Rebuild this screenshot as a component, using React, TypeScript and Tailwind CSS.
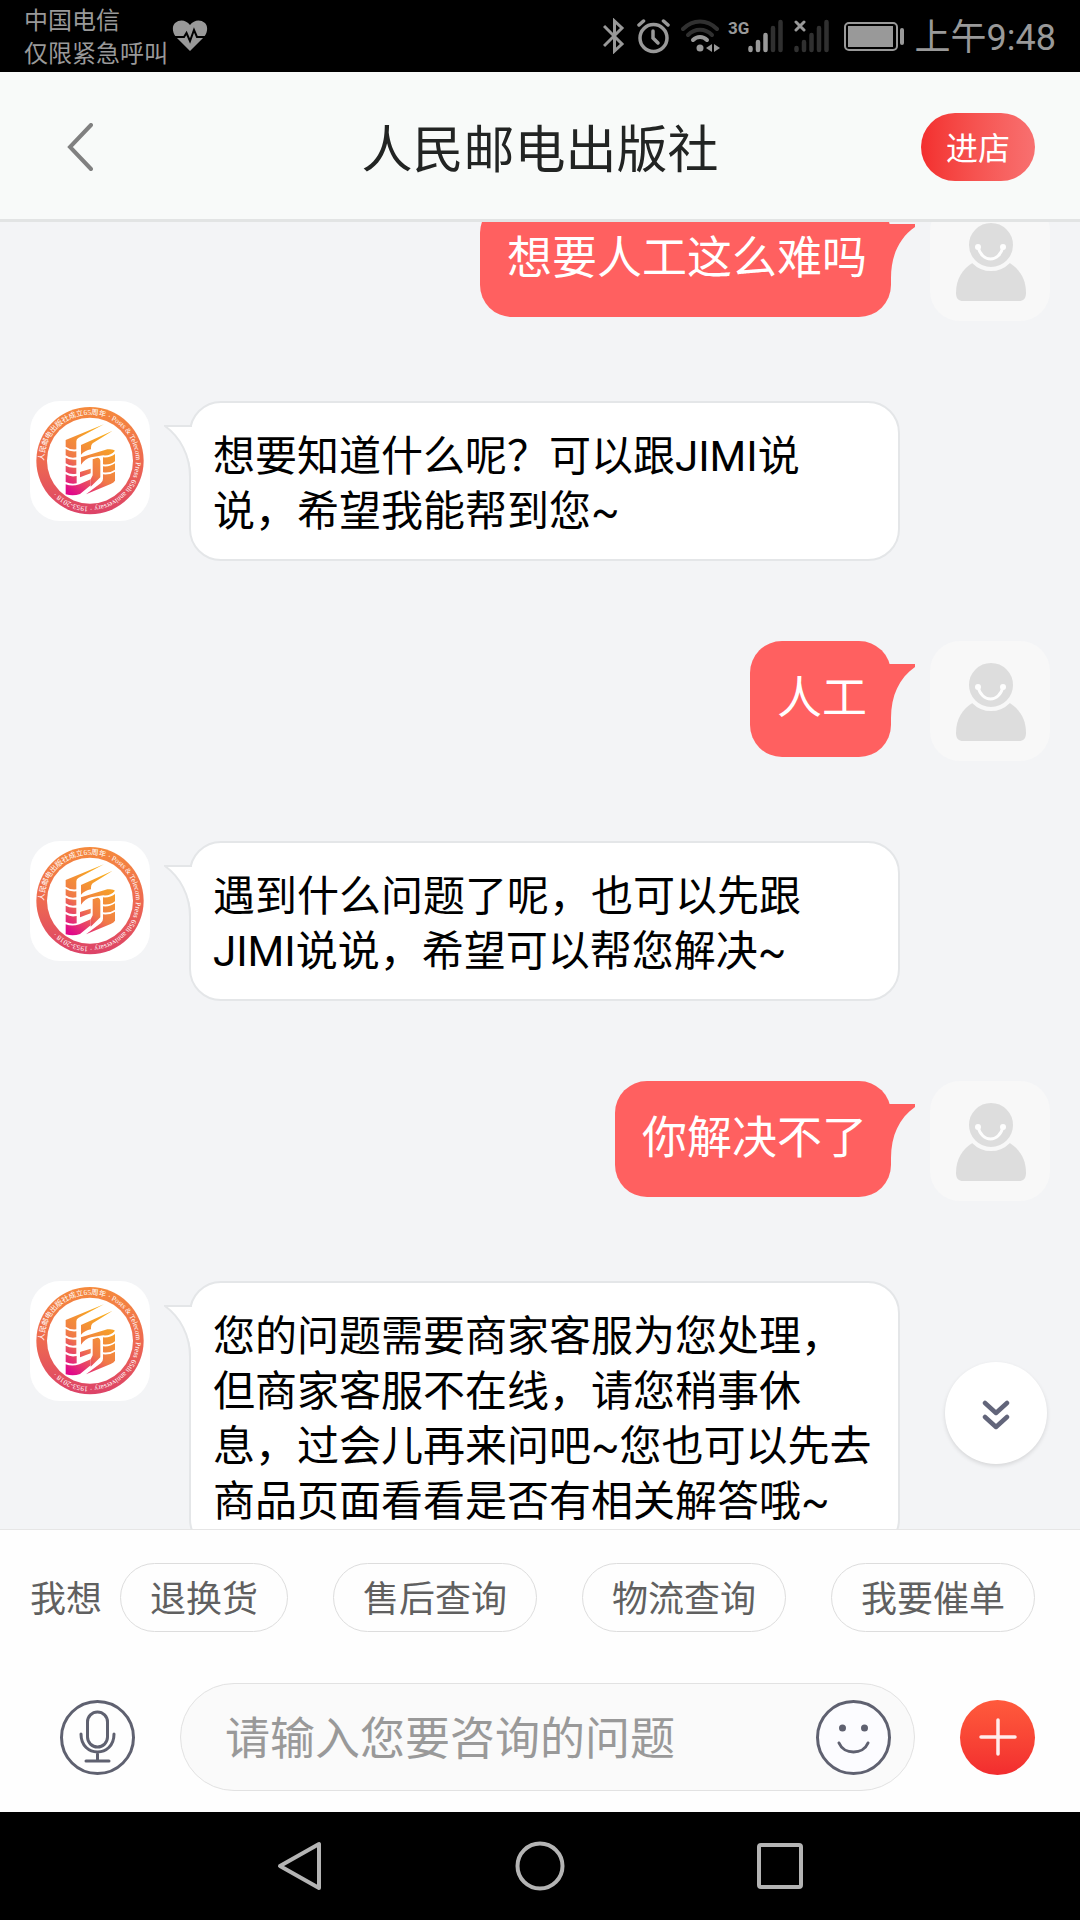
import React, { useLayoutEffect, useRef, useState } from 'react';

interface Message {
  id: number;
  from: 'bot' | 'user';
  lines: string[];
}

const messages: Message[] = [
  { id: 1, from: 'user', lines: ['想要人工这么难吗'] },
  { id: 2, from: 'bot', lines: ['想要知道什么呢？可以跟JIMI说', '说，希望我能帮到您~'] },
  { id: 3, from: 'user', lines: ['人工'] },
  { id: 4, from: 'bot', lines: ['遇到什么问题了呢，也可以先跟', 'JIMI说说，希望可以帮您解决~'] },
  { id: 5, from: 'user', lines: ['你解决不了'] },
  {
    id: 6,
    from: 'bot',
    lines: [
      '您的问题需要商家客服为您处理，',
      '但商家客服不在线，请您稍事休',
      '息，过会儿再来问吧~您也可以先去',
      '商品页面看看是否有相关解答哦~',
    ],
  },
];

const quickReplies = ['退换货', '售后查询', '物流查询', '我要催单'];

const StatusBar: React.FC = () => (
  <div className="flex h-[72px] shrink-0 items-center bg-black px-6 text-[#999999]">
    <div className="pt-1 text-[24px] leading-[33px]">
      <p>中国电信</p>
      <p>仅限紧急呼叫</p>
    </div>
    <svg className="ml-1 h-8 w-9" viewBox="0 0 36 32" fill="none">
      <path
        d="M18 31 L4 17 C0 12 0 6 3 3 C8 -1 14 0 18 5 C22 0 28 -1 33 3 C36 6 36 12 32 17 Z"
        fill="#999999"
      />
      <path d="M1 17 H12 L14.500 13 L18 21 L22 10 L25 17 H35" stroke="#000" strokeWidth="2" />
    </svg>

    <div className="ml-auto flex items-center gap-[11px]">
      <svg className="h-9 w-[23px]" viewBox="0 0 23 36" fill="none" stroke="#999999" strokeWidth="3">
        <path d="M1 8 L19 26 L11.500 33 V3 L19 10 L1 28" />
      </svg>
      <svg className="h-9 w-[33px]" viewBox="0 0 33 36" fill="none" stroke="#999999" strokeWidth="3.500" strokeLinecap="round">
        <circle cx="16.500" cy="20" r="13.500" />
        <path d="M16 13 V20 L21 25" />
        <path d="M2 7 L6.500 3 M31 7 L26.500 3" />
      </svg>
      <svg className="h-9 w-[39px]" viewBox="0 0 39 36" fill="none" strokeLinecap="round" strokeWidth="4">
        <path d="M2 11 C12 1 26 1 36 11" stroke="#303030" />
        <path d="M7 17 C14 10 24 10 31 17" stroke="#303030" />
        <path d="M12 22 C16 18 22 18 26 22" stroke="#999999" />
        <circle cx="19" cy="30" r="3.500" fill="#999999" />
        <path d="M31 26 V34 L25 30 Z M33 26 L39 30 L33 34 Z" fill="#999999" />
      </svg>
      <svg className="h-9 w-[52px] overflow-visible" viewBox="0 0 52 36" strokeLinecap="round" strokeWidth="4.500">
        <text x="-3" y="16" fontSize="17" fontWeight="700" fill="#999999">
          3G
        </text>
        <path d="M19.500 30 V32 M27 24 V32 M34.500 17 V32" stroke="#999999" />
        <path d="M42 10 V32 M49.500 4 V32" stroke="#303030" />
      </svg>
      <svg className="h-9 w-[35px]" viewBox="0 0 35 36" strokeLinecap="round" strokeWidth="4.500">
        <path d="M2.500 30 V32 M10 24 V32 M17.500 17 V32 M25 10 V32 M32.500 4 V32" stroke="#303030" />
        <path d="M2 4 L10 12 M10 4 L2 12" stroke="#999999" strokeWidth="3" />
      </svg>
      <svg className="ml-1 h-9 w-[60px]" viewBox="0 0 60 36" fill="none">
        <rect x="1" y="5" width="52" height="27" rx="4" stroke="#999999" strokeWidth="2" />
        <rect x="4" y="8" width="45" height="21" fill="#999999" />
        <rect x="56" y="10" width="4" height="17" rx="2" fill="#999999" />
      </svg>
      <span className="pt-1 text-[36px] leading-[40px]">上午9:48</span>
    </div>
  </div>
);

const ShopAvatar: React.FC = () => (
  <svg className="size-[120px] shrink-0 rounded-[30px] bg-white" viewBox="30 33 360 360" role="img" aria-label="人民邮电出版社">
    <defs>
      <linearGradient id="ring" x1="0" y1="0" x2="0" y2="1">
        <stop offset="0" stopColor="#f58a3c" />
        <stop offset="0.500" stopColor="#ee6a50" />
        <stop offset="1" stopColor="#dc4268" />
      </linearGradient>
      <linearGradient id="mark" gradientUnits="userSpaceOnUse" x1="140" y1="50" x2="20" y2="210">
        <stop offset="0" stopColor="#f8ac20" />
        <stop offset="0.550" stopColor="#f07a48" />
        <stop offset="1" stopColor="#e0088a" />
      </linearGradient>
      <path id="ringText" d="M72 212 A138 138 0 0 1 348 212 A138 138 0 0 1 72 212" />
    </defs>
    <circle cx="210" cy="212" r="161" fill="url(#ring)" />
    <circle cx="210" cy="212" r="129" fill="#fff" />
    <text fontSize="22" fill="#fff" fontFamily="'Liberation Serif', 'Noto Sans CJK SC', serif">
      <textPath href="#ringText">人民邮电出版社成立65周年 · Posts &amp; Telecom Press 65th anniversary · 1953-2018 ·</textPath>
    </text>
    <g fill="url(#mark)" transform="translate(120 90)">
      <path d="M17 60 L132 13 L56 53 Q49 57 49 64 V88 Q30 90 17 80 Z" />
      <path d="M63 75 L158 32 L98 70 Q93 74 93 82 V88 Q74 92 63 104 Z" />
      <path d="M17 87 Q30 96 49 94 V112 Q30 116 17 106 Z" />
      <path d="M17 113 Q30 121 49 119 V136 Q30 140 17 130 Z" />
      <path d="M17 137 Q30 145 49 143 V161 Q30 165 17 155 Z" />
      <path d="M17 163 Q32 172 50 168 V190 Q34 194 17 186 Z" />
      <path d="M17 193 Q36 200 58 193 L92 178 V196 L60 222 Q40 229 17 223 Z" />
      <path d="M63 112 L142 88 Q160 86 165 92 Q152 108 130 106 L93 112 Q76 116 63 134 Z" />
      <path d="M98 118 L112 113 Q121 114 121 124 V172 L92 200 V178 L98 166 Z" />
      <path d="M60 156 L92 146 V160 L60 172 Z" />
      <path d="M129 112 Q150 114 165 102 V124 Q150 136 129 133 Z" />
      <path d="M129 139 Q150 141 165 130 V149 Q150 160 129 157 Z" />
      <path d="M129 163 Q150 165 165 155 V182 Q162 188 152 192 L78 223 L122 190 Q129 184 129 176 Z" />
    </g>
  </svg>
);

const UserAvatar: React.FC = () => (
  <svg className="size-[120px] shrink-0 rounded-[30px] bg-[#f8f8f8]" viewBox="0 0 120 120" fill="none" role="img" aria-label="我">
    <path d="M26 92 C26 78 32 68 44 61 H78 C90 68 96 78 96 92 C96 98 93 100 89 100 H33 C29 100 26 98 26 92 Z" fill="#dddddd" />
    <circle cx="61" cy="44" r="24" fill="#dddddd" stroke="#f8f8f8" strokeWidth="4" />
    <path d="M48 46 C52 62 69 62 73 46" stroke="#fdfdfd" strokeWidth="3" />
    <circle cx="48" cy="46" r="3" fill="#fdfdfd" />
    <circle cx="73" cy="46" r="3" fill="#fdfdfd" />
  </svg>
);

const BotMessage: React.FC<{ lines: string[] }> = ({ lines }) => (
  <div className="flex items-start pr-[150px]">
    <ShopAvatar />
    <div className="relative ml-[39px] flex-1 rounded-[32px] border-2 border-[#e4e6e8] bg-white px-[22px] pt-[26px] pb-5 text-[42px] leading-[55px] text-black">
      <svg className="absolute top-[22px] -left-[27px] h-[54px] w-8" viewBox="0 0 32 54" fill="none">
        <path d="M2 2 H31 V50 H27 C27 30 16 13 2 2 Z" fill="#fff" />
        <path d="M28 1 H1 C16 12 26 30 26 52" stroke="#e4e6e8" strokeWidth="2" />
      </svg>
      {lines.map(line => (
        <p key={line} className="whitespace-nowrap">{line}</p>
      ))}
    </div>
  </div>
);

const UserMessage: React.FC<{ lines: string[] }> = ({ lines }) => (
  <div className="flex items-start justify-end">
    <div className="relative mr-[39px] rounded-[32px] bg-[#ff6060] py-[28px] pr-6 pl-[27px] text-[45px] leading-[60px] text-white">
      {lines.map(line => (
        <p key={line}>{line}</p>
      ))}
      <svg className="absolute top-[23px] -right-6 h-[54px] w-9" viewBox="0 0 36 54">
        <path d="M0 0 H36 V3 C20 14 12 32 12 54 H0 Z" fill="#ff6060" />
      </svg>
    </div>
    <UserAvatar />
  </div>
);

export default function App() {
  const [draft, setDraft] = useState('');
  const listRef = useRef<HTMLDivElement>(null);

  useLayoutEffect(() => {
    if (listRef.current) listRef.current.scrollTop = 21;
  }, []);

  const scrollToEnd = () => {
    listRef.current?.scrollTo({ top: listRef.current.scrollHeight, behavior: 'smooth' });
  };

  return (
    <div className="flex h-screen flex-col bg-[#f3f4f6] font-['Roboto','Noto_Sans_CJK_SC',sans-serif]">
      <StatusBar />

      {/* Header */}
      <header className="grid h-[150px] shrink-0 grid-cols-[1fr_auto_1fr] items-center border-b-[3px] border-[#e2e4e4] bg-[#f8faf9] px-[45px] pt-[3px]">
        <button type="button" aria-label="返回" className="justify-self-start pl-[22px]">
          <svg className="h-12 w-[26px]" viewBox="0 0 26 48" fill="none" stroke="#808080" strokeWidth="4" strokeLinecap="round">
            <path d="M24 2 L3 24 L24 46" />
          </svg>
        </button>
        <h1 className="pt-2 text-[51px] leading-[60px] text-[#222423]">人民邮电出版社</h1>
        <button
          type="button"
          className="h-[68px] justify-self-end rounded-full bg-linear-to-r from-[#f32e2e] to-[#f87070] px-[25px] pt-1 text-[32px] text-white"
        >
          进店
        </button>
      </header>

      {/* Messages */}
      <main className="relative min-h-0 flex-1">
        <div ref={listRef} className="flex h-full flex-col gap-20 overflow-y-auto px-[30px] pb-20 [scrollbar-width:none]">
          {messages.map(message =>
            message.from === 'bot' ? (
              <BotMessage key={message.id} lines={message.lines} />
            ) : (
              <UserMessage key={message.id} lines={message.lines} />
            )
          )}
        </div>
        <button
          type="button"
          aria-label="滚动到底部"
          onClick={scrollToEnd}
          className="absolute right-[33px] bottom-[65px] flex size-[102px] items-center justify-center rounded-full bg-white pt-1 shadow-[0_2px_4px_rgba(0,0,0,0.12)]"
        >
          <svg className="h-8 w-7" viewBox="0 0 28 32" fill="none" stroke="#62657a" strokeWidth="4.500" strokeLinecap="round" strokeLinejoin="round">
            <path d="M3 4 L14 14 L25 4 M3 18 L14 28 L25 18" />
          </svg>
        </button>
      </main>

      {/* Quick replies and input */}
      <footer className="shrink-0 border-t border-[#e6e6e6] bg-[#fefefe] pt-[33px] pb-[21px]">
        <div className="flex items-center pr-[45px] pl-[30px] text-[36px] text-[#606060]">
          <span className="mr-[18px] pt-1">我想</span>
          <div className="flex flex-1 justify-between">
            {quickReplies.map(reply => (
              <button
                key={reply}
                type="button"
                onClick={() => setDraft(reply)}
                className="h-[69px] rounded-full border border-[#dddddd] px-[29px] pt-1 leading-[60px]"
              >
                {reply}
              </button>
            ))}
          </div>
        </div>

        <div className="mt-[51px] flex items-center gap-[45px] pr-[45px] pl-[60px]">
          <button type="button" aria-label="语音输入">
            <svg className="size-[75px]" viewBox="0 0 75 75" fill="none" stroke="#5f6170" strokeWidth="3" strokeLinecap="round">
              <circle cx="37.500" cy="37.500" r="36" />
              <rect x="27.500" y="12" width="20" height="35" rx="10" />
              <path d="M21 34 C21 58 54 58 54 34 M37.500 53 V61 M26 61 H49" />
            </svg>
          </button>
          <div className="flex h-[108px] min-w-0 flex-1 items-center rounded-full border border-[#e2e2e2] bg-[#fafafa] pr-[23px] pl-11">
            <input
              type="text"
              aria-label="咨询问题"
              placeholder="请输入您要咨询的问题"
              value={draft}
              onChange={e => setDraft(e.target.value)}
              className="h-[72px] min-w-0 flex-1 bg-transparent pt-1 text-[45px] text-[#333333] outline-none placeholder:text-[#999999]"
            />
            <button type="button" aria-label="表情">
              <svg className="size-[75px]" viewBox="0 0 75 75" fill="none" stroke="#5f6170" strokeWidth="3" strokeLinecap="round">
                <circle cx="37.500" cy="37.500" r="36" fill="#fcfcff" />
                <path d="M23 43 C28 55 47 55 52 43" />
                <circle cx="26.500" cy="28" r="2" fill="#5f6170" />
                <circle cx="48.500" cy="28" r="2" fill="#5f6170" />
              </svg>
            </button>
          </div>
          <button
            type="button"
            aria-label="更多"
            className="flex size-[75px] items-center justify-center rounded-full bg-linear-to-b from-[#ff5a3c] to-[#f22c2f]"
          >
            <svg className="size-[38px]" viewBox="0 0 38 38" stroke="#ffecec" strokeWidth="3.500" strokeLinecap="round">
              <path d="M19 2 V36 M2 19 H36" />
            </svg>
          </button>
        </div>
      </footer>

      {/* System navigation */}
      <nav className="flex h-[108px] shrink-0 items-center justify-center gap-[190px] bg-black">
        <button type="button" aria-label="后退">
          <svg className="size-[50px]" viewBox="0 0 50 50" fill="none" stroke="#b4b4b4" strokeWidth="4" strokeLinejoin="round">
            <path d="M44 3 V47 L5 25 Z" />
          </svg>
        </button>
        <button type="button" aria-label="主页">
          <svg className="size-[50px]" viewBox="0 0 50 50" fill="none" stroke="#b4b4b4" strokeWidth="4">
            <circle cx="25" cy="25" r="22.500" />
          </svg>
        </button>
        <button type="button" aria-label="最近任务">
          <svg className="size-[50px]" viewBox="0 0 50 50" fill="none" stroke="#b4b4b4" strokeWidth="4">
            <rect x="4" y="4" width="42" height="42" rx="2" />
          </svg>
        </button>
      </nav>
    </div>
  );
}
